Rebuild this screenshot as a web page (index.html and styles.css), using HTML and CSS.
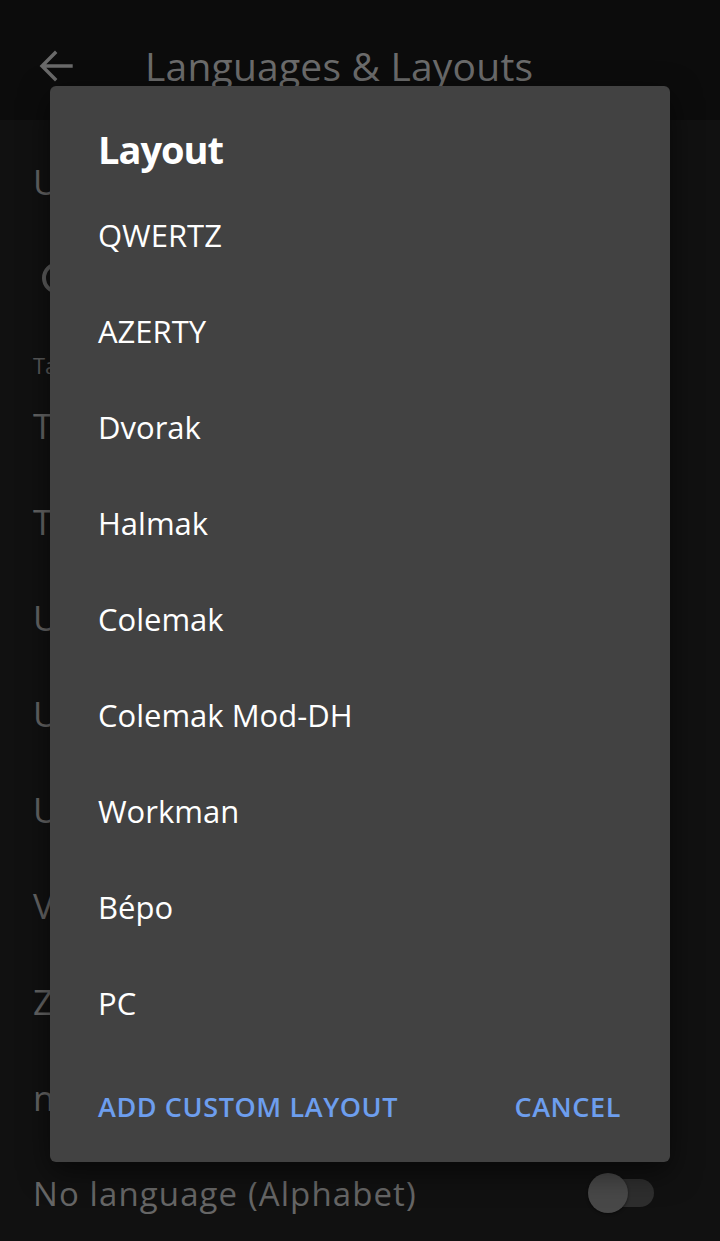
FILE: index.html
```html
<!DOCTYPE html>
<html lang="en">
<head>
<meta charset="utf-8">
<title>Languages &amp; Layouts</title>
<link rel="stylesheet" href="styles.css">
</head>
<body>
<div class="app">
  <header class="toolbar">
    <svg class="back" width="34" height="32" viewBox="0 0 34 32" aria-hidden="true">
      <path d="M32 16H4M16 3L3 16l13 13" fill="none" stroke="#6a6a6a" stroke-width="3.4" stroke-linecap="square"/>
    </svg>
    <h1 class="title">Languages &amp; Layouts</h1>
  </header>
  <main class="list">
    <div class="row tall">Use system languages</div>
    <div class="row chiprow"><span class="ring"></span></div>
    <div class="section">Tastaturen</div>
    <div class="row">Thai</div>
    <div class="row">Turkish</div>
    <div class="row">Ukrainian</div>
    <div class="row">Urdu</div>
    <div class="row">Uzbek</div>
    <div class="row">Vietnamese</div>
    <div class="row">Zulu</div>
    <div class="row">nko</div>
    <div class="row last">
      <span class="label">No language (Alphabet)</span>
      <span class="switch"><span class="thumb"></span></span>
    </div>
  </main>
</div>
<div class="dialog">
  <h2 class="dtitle">Layout</h2>
  <ul class="options">
    <li>QWERTZ</li>
    <li>AZERTY</li>
    <li>Dvorak</li>
    <li>Halmak</li>
    <li>Colemak</li>
    <li>Colemak Mod-DH</li>
    <li>Workman</li>
    <li>Bépo</li>
    <li>PC</li>
  </ul>
  <div class="actions">
    <span class="btn">ADD CUSTOM LAYOUT</span>
    <span class="btn">CANCEL</span>
  </div>
</div>
</body>
</html>
```
FILE: styles.css
```css
* { box-sizing: border-box; }
html, body { margin: 0; padding: 0; }
body {
  width: 720px;
  height: 1241px;
  overflow: hidden;
  background: #111111;
  font-family: "Open Sans", "Noto Sans", sans-serif;
  position: relative;
}
.app { width: 720px; height: 1241px; display: flex; flex-direction: column; }
.toolbar {
  height: 120px;
  background: #0c0c0c;
  display: flex;
  align-items: center;
  padding: 10px 0 0 39px;
}
.back { display: block; margin-top: 2px; }
.title {
  margin: 0 0 0 72px;
  font-weight: 400;
  font-size: 39px;
  color: #6b6b6b;
  letter-spacing: 0.2px;
}
.list { display: flex; flex-direction: column; }
.row {
  height: 96px;
  display: flex;
  align-items: center;
  padding-left: 33px;
  font-size: 35px;
  color: #646464;
}
.row.tall { height: 122px; }
.row.chiprow { height: 72px; padding-left: 42px; }
.ring {
  width: 32px; height: 32px;
  border: 4px solid #5c5c5c;
  border-radius: 50%;
  display: block;
}
.section {
  height: 63px;
  padding: 40px 0 0 33px;
  font-size: 22px;
  line-height: 23px;
  color: #5a5a5a;
}
.row.last {
  justify-content: space-between;
  padding-right: 66px;
  font-size: 33px;
  letter-spacing: 1.1px;
  color: #666666;
}
.switch {
  position: relative;
  width: 56px; height: 28px;
  border-radius: 14px;
  background: #2e2e2e;
  display: block;
}
.thumb {
  position: absolute;
  left: -10px; top: -6px;
  width: 40px; height: 40px;
  border-radius: 50%;
  background: #484848;
  box-shadow: 0 1px 3px rgba(0,0,0,0.5);
}
.dialog {
  position: absolute;
  left: 50px; top: 86px;
  width: 620px; height: 1076px;
  background: #424242;
  border-radius: 6px;
  box-shadow: 0 10px 30px rgba(0,0,0,0.55);
  display: flex;
  flex-direction: column;
  padding-top: 39px;
}
.dtitle {
  margin: 0 0 14px 48px;
  font-size: 38px;
  line-height: 48px;
  font-weight: 700;
  letter-spacing: -1px;
  color: #ffffff;
}
.options { list-style: none; margin: 0; padding: 0; }
.options li {
  height: 96px;
  line-height: 96px;
  padding-left: 48px;
  font-size: 31px;
  color: #ffffff;
}
.actions {
  flex: 1;
  display: flex;
  align-items: center;
  justify-content: space-between;
  padding: 0 49px 0 48px;
}
.btn {
  font-size: 27px;
  font-weight: 600;
  color: #6d9eee;
  letter-spacing: 0.6px;
}
```
